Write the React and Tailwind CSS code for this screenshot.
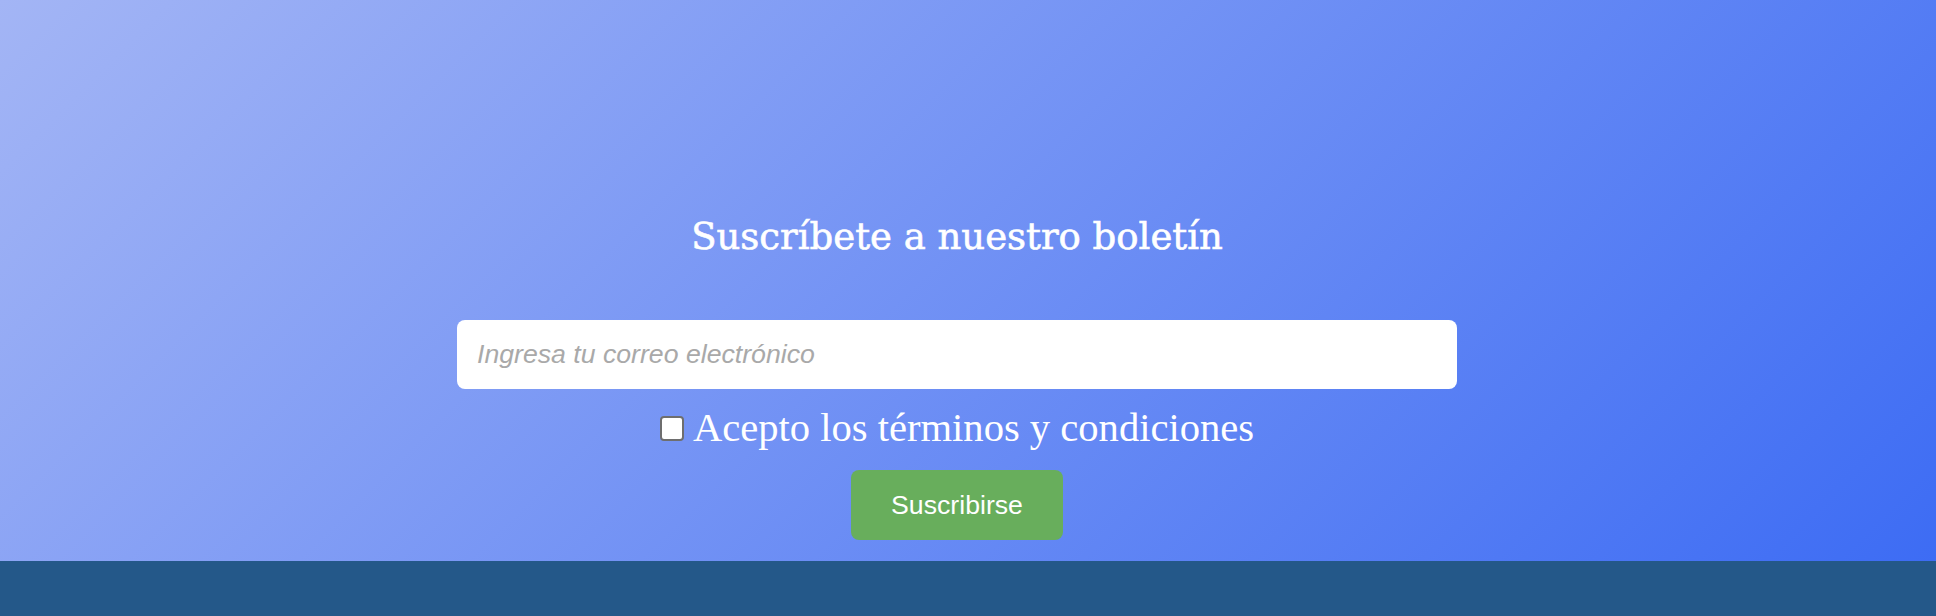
import { useState } from "react";

export default function App() {
  const [email, setEmail] = useState("");
  const [accepted, setAccepted] = useState(false);

  return (
    <div className="min-h-screen flex flex-col">
      {/* Newsletter */}
      <section className="flex flex-col items-center pt-[214px] pb-[21px] pr-[22px] bg-[linear-gradient(135deg,#a3b5f5,#3d6cf4)]">
        <h2 className="text-[37px] leading-[46px] text-white font-['DejaVu_Serif',serif] [-webkit-text-stroke:0.6px_white]">
          Suscríbete a nuestro boletín
        </h2>

        <form
          onSubmit={(e) => e.preventDefault()}
          className="flex flex-col items-center w-full"
        >
          <input
            type="email"
            value={email}
            onChange={(e) => setEmail(e.target.value)}
            placeholder="Ingresa tu correo electrónico"
            className="mt-[60px] w-[1000px] px-5 py-5 text-[26.67px] leading-[29px] bg-white rounded-lg outline-none text-gray-800 placeholder:italic placeholder:text-[#a9a9a9] font-['Liberation_Sans',Arial,sans-serif]"
          />

          <label className="mt-4 flex items-center gap-[9px] h-[46px] text-white text-[40.6px] leading-[46px] font-['Liberation_Serif',serif] cursor-pointer">
            <input
              type="checkbox"
              checked={accepted}
              onChange={(e) => setAccepted(e.target.checked)}
              className="appearance-none w-[24px] h-[25px] bg-white border-2 border-[#6e6e6e] rounded-[4px] checked:bg-[#68ae5c]"
            />
            Acepto los términos y condiciones
          </label>

          <button
            type="submit"
            className="mt-[19px] px-10 py-5 rounded-lg bg-[#68ae5c] text-white text-[26.67px] leading-[30px] font-['Liberation_Sans',Arial,sans-serif]"
          >
            Suscribirse
          </button>
        </form>
      </section>

      <footer className="flex-1 min-h-[55px] bg-[#245889]" />
    </div>
  );
}
